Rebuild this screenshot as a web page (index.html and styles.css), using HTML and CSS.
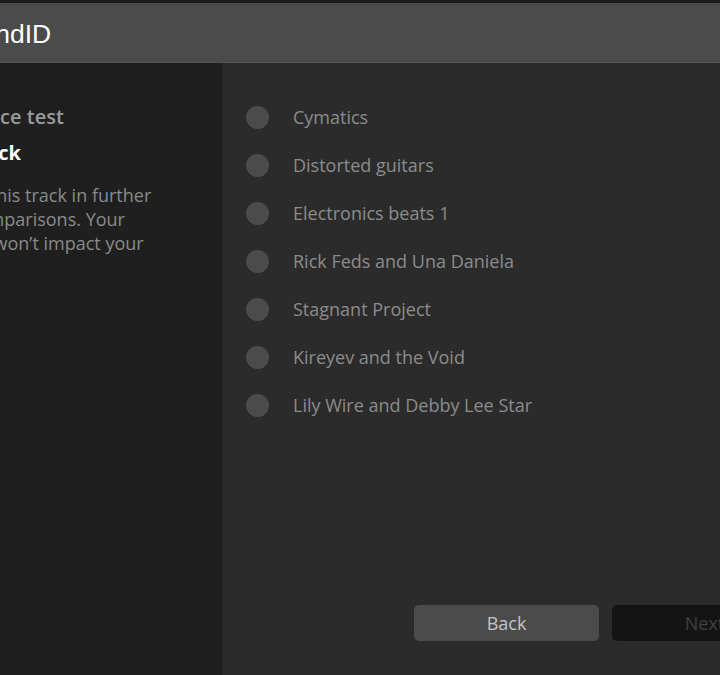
FILE: index.html
```html
<!DOCTYPE html>
<html lang="en">
<head>
    <meta charset="UTF-8">
    <meta name="viewport" content="width=device-width, initial-scale=1.0">
    <title>SoundID</title>
    <link rel="stylesheet" href="styles.css">
</head>
<body>
    <div class="app">
        <header class="topbar">
            <div class="brand">SoundID</div>
        </header>
        <div class="main">
            <aside class="sidebar">
                <div class="step">Preference test</div>
                <div class="title">Your track</div>
                <p class="hint">We'll use this track in further<br>sound comparisons. Your<br>decisions won’t impact your<br>results.</p>
            </aside>
            <section class="panel">
                <ul class="tracks">
                    <li class="track"><span class="dot"></span>Cymatics</li>
                    <li class="track"><span class="dot"></span>Distorted guitars</li>
                    <li class="track"><span class="dot"></span>Electronics beats 1</li>
                    <li class="track"><span class="dot"></span>Rick Feds and Una Daniela</li>
                    <li class="track"><span class="dot"></span>Stagnant Project</li>
                    <li class="track"><span class="dot"></span>Kireyev and the Void</li>
                    <li class="track"><span class="dot"></span>Lily Wire and Debby Lee Star</li>
                </ul>
                <div class="actions">
                    <button class="btn back">Back</button>
                    <button class="btn next" disabled>Next</button>
                </div>
            </section>
        </div>
    </div>
</body>
</html>
```

FILE: styles.css
```css
* {
    margin: 0;
    padding: 0;
    box-sizing: border-box;
}

html, body {
    height: 100%;
    overflow: hidden;
}

body {
    background: #1b1b1b;
    font-family: 'Open Sans', sans-serif;
}

.app {
    margin-left: -100px;
    width: 930px;
    height: 100vh;
    padding-top: 3px;
    display: flex;
    flex-direction: column;
}

.topbar {
    height: 60px;
    background: #4b4b4b;
    border-bottom: 1px solid #545454;
    display: flex;
    align-items: center;
    padding-left: 48px;
    padding-top: 3px;
}

.brand {
    font-family: 'Liberation Sans', Arial, sans-serif;
    font-size: 26.5px;
    color: #ffffff;
}

.main {
    flex: 1;
    display: flex;
}

.sidebar {
    width: 322px;
    background: #1f1f1f;
    padding: 40px 0 0 16px;
}

.step {
    font-size: 20px;
    font-weight: 600;
    line-height: 28px;
    color: #9a9a9a;
}

.title {
    font-size: 20px;
    font-weight: 700;
    line-height: 28px;
    color: #ffffff;
    margin-top: 8px;
}

.hint {
    font-size: 18px;
    line-height: 24px;
    color: #8a8a8a;
    margin: 16px 0 0 -5px;
}

.panel {
    flex: 1;
    background: #2b2b2b;
    display: flex;
    flex-direction: column;
    padding: 30px 33px 34px 24px;
}

.tracks {
    list-style: none;
    flex: 1;
}

.track {
    height: 48px;
    display: flex;
    align-items: center;
    gap: 24px;
    font-size: 18px;
    color: #8b8b8b;
}

.dot {
    width: 23px;
    height: 23px;
    border-radius: 50%;
    background: #4b4b4b;
    flex-shrink: 0;
}

.actions {
    display: flex;
    justify-content: flex-end;
    gap: 13px;
}

.btn {
    width: 185px;
    height: 36px;
    border: none;
    border-radius: 5px;
    font-family: 'Open Sans', sans-serif;
    font-size: 18px;
}

.back {
    background: #4b4b4b;
    color: #c4c4c4;
}

.next {
    background: #141414;
    color: #3f3f3f;
}
```
